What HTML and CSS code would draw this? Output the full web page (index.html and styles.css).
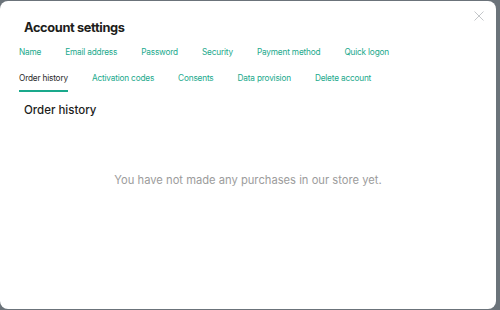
FILE: index.html
```html
<!DOCTYPE html>
<html lang="en">
<head>
<meta charset="utf-8">
<link rel="stylesheet" href="styles.css">
</head>
<body>
<div class="modal">
  <button class="close" aria-label="Close">
    <svg width="10" height="10" viewBox="0 0 10 10"><path d="M0.5 0.5 L9.5 9.5 M9.5 0.5 L0.5 9.5" stroke="#c4c7ca" stroke-width="1" fill="none"/></svg>
  </button>
  <h1 class="title">Account settings</h1>
  <nav class="tabs">
    <a class="tab">Name</a>
    <a class="tab">Email address</a>
    <a class="tab">Password</a>
    <a class="tab">Security</a>
    <a class="tab">Payment method</a>
    <a class="tab">Quick logon</a>
    <a class="tab active">Order history</a>
    <a class="tab">Activation codes</a>
    <a class="tab">Consents</a>
    <a class="tab">Data provision</a>
    <a class="tab">Delete account</a>
  </nav>
  <h2 class="section">Order history</h2>
  <p class="empty">You have not made any purchases in our store yet.</p>
</div>
</body>
</html>
```
FILE: styles.css
```css
html, body {
  margin: 0;
  padding: 0;
}
body {
  width: 500px;
  height: 310px;
  background: #6b737a;
  overflow: hidden;
  font-family: Inter, "Noto Sans", sans-serif;
}
.modal {
  position: relative;
  box-sizing: border-box;
  margin: 1px 4px 0 0;
  width: 496px;
  height: 308px;
  background: #fff;
  border-radius: 8px;
  padding: 19px 0 0 19px;
}
.close {
  position: absolute;
  top: 10px;
  right: 12px;
  width: 10px;
  height: 10px;
  padding: 0;
  border: 0;
  background: none;
  display: flex;
}
.title {
  margin: 0 0 0 5px;
  font-size: 12.8px;
  line-height: 16px;
  font-weight: 700;
  letter-spacing: -0.35px;
  color: #1d1d1b;
}
.tabs {
  display: flex;
  flex-wrap: wrap;
  width: 420px;
  column-gap: 24px;
  row-gap: 5px;
  margin-top: 10px;
}
.tab {
  font-size: 8.25px;
  line-height: 12px;
  letter-spacing: -0.18px;
  padding-bottom: 6.5px;
  border-bottom: 2px solid transparent;
  color: #1aa98c;
}
.tab.active {
  color: #2a2a2a;
  border-bottom-color: #1aa98c;
}
.section {
  margin: 10.5px 0 0 5px;
  font-size: 11.5px;
  line-height: 14px;
  font-weight: 500;
  color: #1d1d1b;
}
.empty {
  margin: 56px 0 0 -19px;
  text-align: center;
  font-size: 11.2px;
  line-height: 14px;
  color: #9c9c9c;
}
```
